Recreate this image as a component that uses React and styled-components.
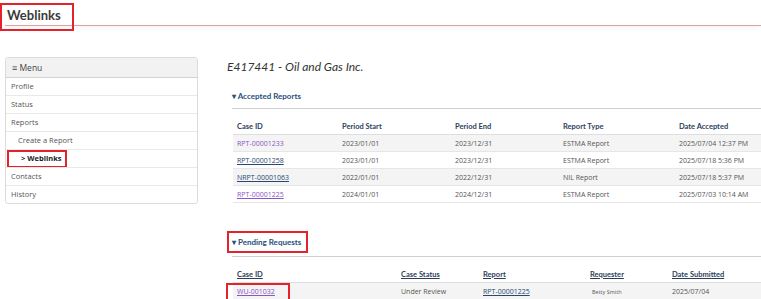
import React from 'react';
import styled, { createGlobalStyle } from 'styled-components';

const GlobalStyle = createGlobalStyle`
    body {
        margin: 0;
        background: #fff;
        font-family: "Open Sans", "Liberation Sans", sans-serif;
        color: #444;
        overflow: hidden;
    }
`;

const accepted = [
    { id: 'RPT-00001233', start: '2023/01/01', end: '2023/12/31', type: 'ESTMA Report', date: '2025/07/04 12:37 PM', visited: true, plain: true },
    { id: 'RPT-00001258', start: '2023/01/01', end: '2023/12/31', type: 'ESTMA Report', date: '2025/07/18 5:36 PM' },
    { id: 'NRPT-00001063', start: '2022/01/01', end: '2022/12/31', type: 'NIL Report', date: '2025/07/18 5:37 PM' },
    { id: 'RPT-00001225', start: '2024/01/01', end: '2024/12/31', type: 'ESTMA Report', date: '2025/07/03 10:14 AM', visited: true },
];

const menu = [
    { label: 'Profile' },
    { label: 'Status' },
    { label: 'Reports' },
    { label: 'Create a Report', sub: true },
    { label: '> Weblinks', sub: true, active: true },
    { label: 'Contacts' },
    { label: 'History' },
];

const App = () => {
    return (
        <>
            <GlobalStyle />
            <TopBar>
                <PageTitle>
                    Weblinks
                    <Highlight $top={-5} $left={-7} $right={-13} $bottom={-9} />
                </PageTitle>
            </TopBar>
            <Layout>
                <Sidebar>
                    <MenuHeader><span>≡</span> Menu</MenuHeader>
                    {menu.map(item => (
                        <MenuItem key={item.label} $sub={item.sub} $active={item.active}>
                            {item.label}
                            {item.active && <Highlight $top={0} $left={1} $width={56} $bottom={-1} />}
                        </MenuItem>
                    ))}
                </Sidebar>
                <Main>
                    <CompanyTitle>E417441 - Oil and Gas Inc.</CompanyTitle>
                    <Section $top={15}>
                        <SectionHeading $pad={6}>
                            <HeadingLabel>▾ Accepted Reports</HeadingLabel>
                        </SectionHeading>
                        <Table>
                            <colgroup>
                                <col style={{ width: 105 }} />
                                <col style={{ width: 113 }} />
                                <col style={{ width: 108 }} />
                                <col style={{ width: 116 }} />
                                <col />
                            </colgroup>
                            <thead>
                                <tr>
                                    <Th>Case ID</Th>
                                    <Th>Period Start</Th>
                                    <Th>Period End</Th>
                                    <Th>Report Type</Th>
                                    <Th>Date Accepted</Th>
                                </tr>
                            </thead>
                            <tbody>
                                {accepted.map(row => (
                                    <Row key={row.id}>
                                        <Td><CaseLink $visited={row.visited} $plain={row.plain}>{row.id}</CaseLink></Td>
                                        <Td>{row.start}</Td>
                                        <Td>{row.end}</Td>
                                        <Td>{row.type}</Td>
                                        <Td>{row.date}</Td>
                                    </Row>
                                ))}
                            </tbody>
                        </Table>
                    </Section>
                    <Section $top={33}>
                        <SectionHeading $pad={8}>
                            <HeadingLabel>
                                ▾ Pending Requests
                                <Highlight $top={-5} $left={-5} $right={-7} $bottom={-5} />
                            </HeadingLabel>
                        </SectionHeading>
                        <Table>
                            <colgroup>
                                <col style={{ width: 164 }} />
                                <col style={{ width: 82 }} />
                                <col style={{ width: 107 }} />
                                <col style={{ width: 82 }} />
                                <col />
                            </colgroup>
                            <thead>
                                <tr>
                                    <Th $underline>Case ID</Th>
                                    <Th $underline>Case Status</Th>
                                    <Th $underline>Report</Th>
                                    <Th $underline>Requester</Th>
                                    <Th $underline>Date Submitted</Th>
                                </tr>
                            </thead>
                            <tbody>
                                <Row>
                                    <Td $rel>
                                        <CaseLink $visited>WU-001032</CaseLink>
                                        <Highlight $top={0} $left={-7} $width={60} $bottom={-2} />
                                    </Td>
                                    <Td>Under Review</Td>
                                    <Td><CaseLink>RPT-00001225</CaseLink></Td>
                                    <Td><Small>Betty Smith</Small></Td>
                                    <Td>2025/07/04</Td>
                                </Row>
                            </tbody>
                        </Table>
                    </Section>
                </Main>
            </Layout>
        </>
    );
};

const TopBar = styled.div`
    margin-left: 5px;
    height: 25px;
    border-bottom: 1px solid #d9a3a6;
    box-shadow: 0 4px 5px -2px rgba(0,0,0,0.05);
    font-size: 0;
`

const PageTitle = styled.span`
    position: relative;
    display: inline-block;
    vertical-align: top;
    margin-left: 2px;
    margin-top: 8px;
    font-family: Lato, "Open Sans", sans-serif;
    font-weight: 700;
    font-size: 13px;
    line-height: 14px;
    color: #3a3a3a;
`

const Highlight = styled.span`
    position: absolute;
    top: ${p => p.$top}px;
    left: ${p => p.$left}px;
    bottom: ${p => p.$bottom}px;
    ${p => p.$width !== undefined ? `width: ${p.$width}px;` : `right: ${p.$right}px;`}
    border: 2px solid #e3222b;
    pointer-events: none;
`

const Layout = styled.div`
    display: flex;
    align-items: flex-start;
`

const Sidebar = styled.div`
    margin: 31px 0 0 5px;
    width: 191px;
    border: 1px solid #dcdcdc;
    border-radius: 3px;
`

const MenuHeader = styled.div`
    height: 19px;
    line-height: 19px;
    padding-left: 6px;
    background: #f2f2f2;
    border-bottom: 1px solid #d2d2d2;
    font-size: 8.5px;
    color: #444;
    span {
        font-weight: 700;
        font-size: 9px;
    }
`

const MenuItem = styled.div`
    position: relative;
    height: 17px;
    line-height: 17px;
    padding-left: ${p => p.$sub ? (p.$active ? 15 : 12) : 5}px;
    font-size: 7.5px;
    font-weight: ${p => p.$active ? 700 : 400};
    color: ${p => p.$active ? '#222' : '#555'};
    border-top: 1px solid #e9e9e9;
    &:nth-child(2) {
        border-top: none;
    }
`

const Main = styled.div`
    flex: 1;
    margin-left: 29px;
    min-width: 0;
`

const CompanyTitle = styled.div`
    margin-top: 33px;
    font-family: Lato, "Open Sans", sans-serif;
    font-style: italic;
    font-size: 12px;
    line-height: 16px;
    color: #333;
`

const Section = styled.div`
    margin-top: ${p => p.$top}px;
    margin-left: 5px;
`

const SectionHeading = styled.div`
    display: flex;
    padding-bottom: ${p => p.$pad}px;
    border-bottom: 1.5px solid #cfcfcf;
`

const HeadingLabel = styled.span`
    position: relative;
    display: block;
    font-family: Lato, "Open Sans", sans-serif;
    font-weight: 700;
    font-size: 8px;
    line-height: 12px;
    color: #27507c;
`

const Table = styled.table`
    margin: 9px 0 0 1px;
    width: 570px;
    table-layout: fixed;
    border-collapse: collapse;
`

const Th = styled.th`
    height: 16px;
    padding: 0 4px;
    text-align: left;
    font-family: Lato, "Open Sans", sans-serif;
    font-weight: 700;
    font-size: 7.5px;
    color: #2c3e5a;
    text-decoration: ${p => p.$underline ? 'underline' : 'none'};
    border-bottom: 1px solid #dedede;
`

const Row = styled.tr`
    height: 17px;
    &:nth-child(odd) {
        background: #f4f4f4;
    }
    td {
        border-bottom: 1px solid #e6e6e6;
    }
`

const Td = styled.td`
    position: ${p => p.$rel ? 'relative' : 'static'};
    padding: 0 4px;
    font-size: 7px;
    color: #555;
    white-space: nowrap;
`

const CaseLink = styled.a`
    color: ${p => p.$visited ? '#8a55c4' : '#2a4770'};
    text-decoration: ${p => p.$plain ? 'none' : 'underline'};
    cursor: pointer;
`

const Small = styled.span`
    font-size: 5.5px;
    margin-left: 2px;
    color: #555;
`

export default App;
